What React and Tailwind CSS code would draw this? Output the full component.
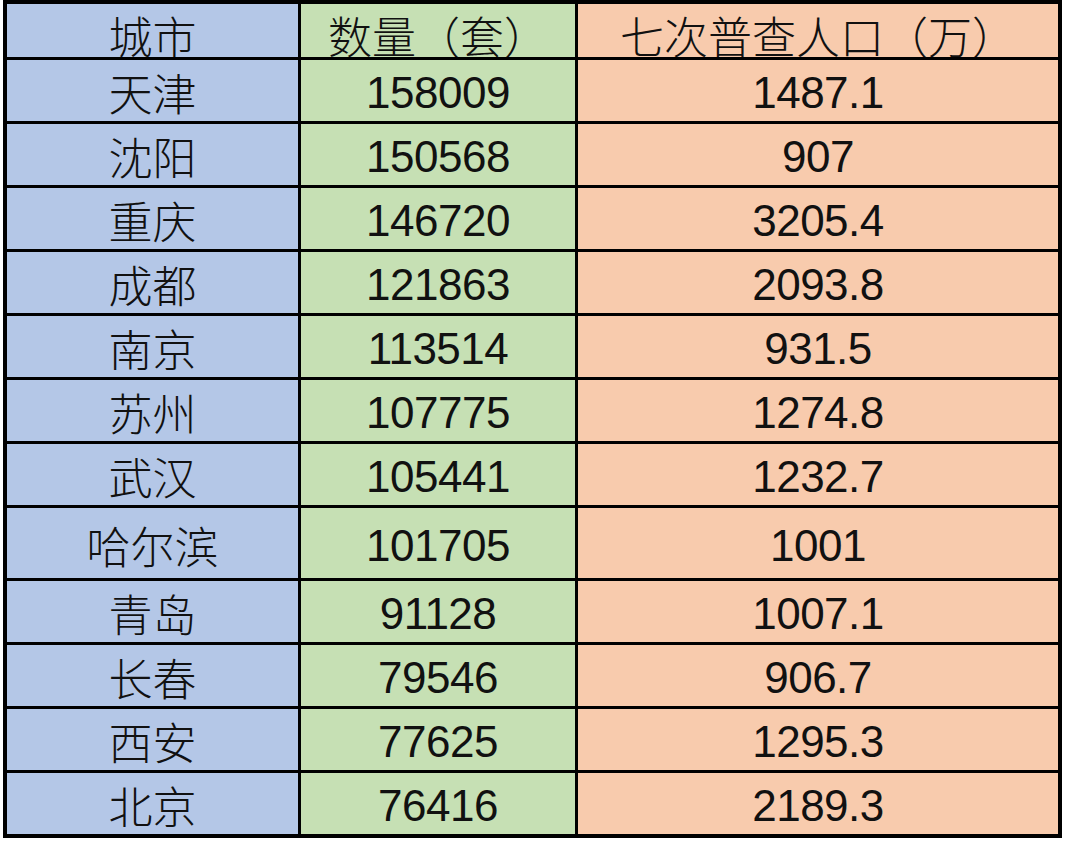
const rows = [
  ["天津", "158009", "1487.1"],
  ["沈阳", "150568", "907"],
  ["重庆", "146720", "3205.4"],
  ["成都", "121863", "2093.8"],
  ["南京", "113514", "931.5"],
  ["苏州", "107775", "1274.8"],
  ["武汉", "105441", "1232.7"],
  ["哈尔滨", "101705", "1001"],
  ["青岛", "91128", "1007.1"],
  ["长春", "79546", "906.7"],
  ["西安", "77625", "1295.3"],
  ["北京", "76416", "2189.3"],
];

const cjk = "font-['Noto_Sans_CJK_SC',sans-serif] text-[44px] leading-none font-light";
const num = "font-['Liberation_Sans',Arial,sans-serif] text-[44px] leading-none tracking-[-0.5px]";

export default function App() {
  return (
    <div className="w-[1066px] h-[844px] bg-white text-[#111]">
      <div className="ml-[3px] w-[1059px] border-[4px] border-black bg-black grid grid-cols-[291px_274px_480px] gap-[3px] grid-rows-[53px_61px_61px_61px_61px_61px_61px_61px_70px_61px_61px_61px_61px]">
        {/* header */}
        <div className={`bg-[#b4c7e7] overflow-hidden flex justify-center pt-[9px] ${cjk}`}>城市</div>
        <div className={`bg-[#c6e0b4] overflow-hidden flex justify-center pt-[9px] ${cjk}`}>数量（套）</div>
        <div className={`bg-[#f8cbad] overflow-hidden flex justify-center pt-[9px] ${cjk}`}>七次普查人口（万）</div>

        {rows.map((r) => (
          <>
            <div key={r[0] + "a"} className={`bg-[#b4c7e7] flex items-center justify-center pt-[3px] ${cjk}`}>{r[0]}</div>
            <div key={r[0] + "b"} className={`bg-[#c6e0b4] flex items-center justify-center pt-[5px] ${num}`}>{r[1]}</div>
            <div key={r[0] + "c"} className={`bg-[#f8cbad] flex items-center justify-center pt-[5px] ${num}`}>{r[2]}</div>
          </>
        ))}
      </div>
    </div>
  );
}
